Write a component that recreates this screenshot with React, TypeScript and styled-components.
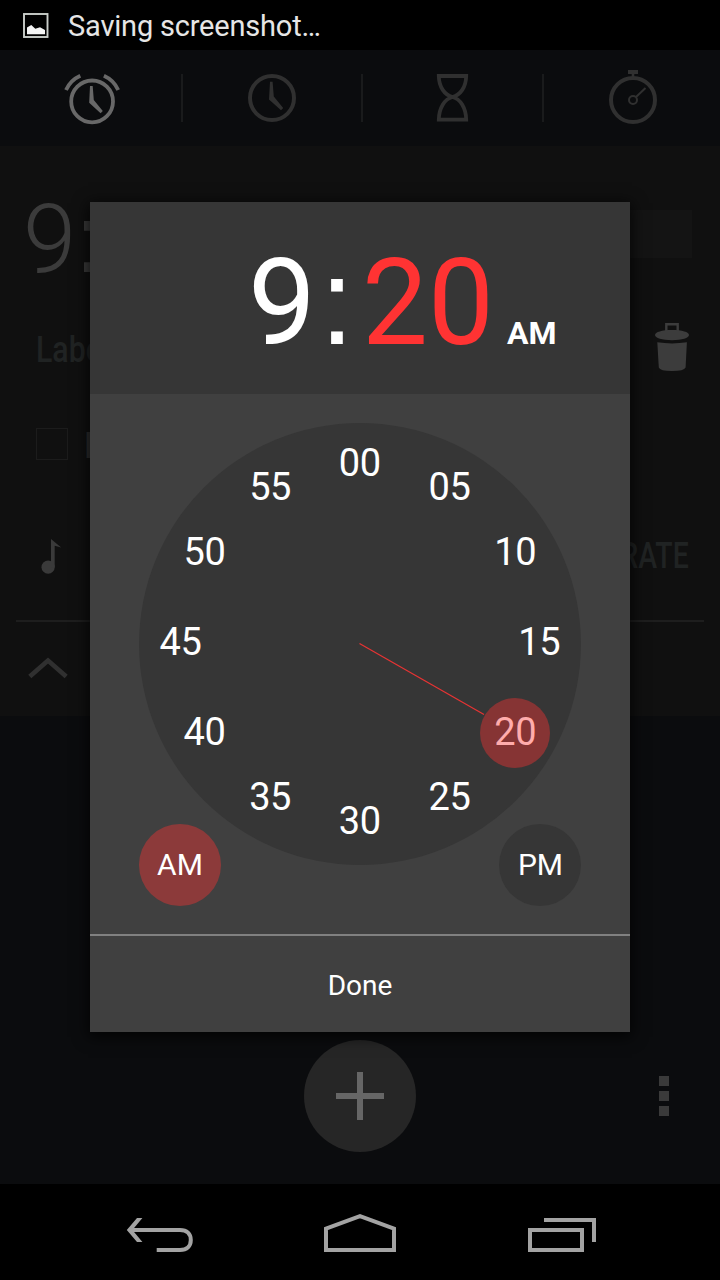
import React from 'react';
import styled, { createGlobalStyle } from 'styled-components';

const GlobalStyle = createGlobalStyle`
  * { box-sizing: border-box; }
  body { margin: 0; background: #000; }
  svg { display: block; flex: none; }
`;

const DIM = '#303030';

const Screen = styled.div`
  position: relative;
  width: 720px;
  height: 1280px;
  overflow: hidden;
  display: flex;
  flex-direction: column;
  background: #0b0c0e;
  font-family: Roboto, 'Liberation Sans', sans-serif;
  color: #fff;
`;

const StatusBar = styled.header`
  height: 50px;
  flex: none;
  display: flex;
  align-items: center;
  gap: 19px;
  padding-left: 22px;
  background: #000;
  color: #e6e6e6;
  font-size: 29px;
  line-height: 48px;
  white-space: nowrap;
`;

const StatusText = styled.span`
  padding-top: 2px;
  letter-spacing: -0.2px;
`;

const Tabs = styled.nav`
  height: 96px;
  flex: none;
  display: grid;
  grid-template-columns: 181px 180px 181px 178px;
`;

const Tab = styled.div<{ $inset: number }>`
  display: flex;
  align-items: center;
  padding-left: ${(p) => p.$inset}px;
`;

const Divider = styled.i`
  width: 2px;
  height: 48px;
  margin-right: 57px;
  background: #1a1b1c;
`;

const Card = styled.section`
  height: 570px;
  flex: none;
  display: flex;
  flex-direction: column;
  background: #101010;
`;

const CardRow = styled.div<{ $height: number; $left?: number; $right?: number }>`
  height: ${(p) => p.$height}px;
  flex: none;
  display: flex;
  align-items: center;
  justify-content: space-between;
  padding: 0 ${(p) => p.$right ?? 28}px 0 ${(p) => p.$left ?? 28}px;
`;

const AlarmTime = styled.span`
  display: flex;
  align-items: baseline;
  margin-top: 10px;
  font-size: 96px;
  font-weight: 300;
  line-height: 96px;
  color: #3b3b3b;
`;

const AlarmColon = styled.span`
  width: 30px;
  margin-left: -1px;
  font-family: 'Liberation Sans', sans-serif;
  font-weight: 400;
`;

const Toggle = styled.span`
  width: 130px;
  height: 48px;
  background: #141414;
`;

const Condensed = styled.span<{ $origin: string; $scale: number; $drop?: number }>`
  display: inline-block;
  margin-top: ${(p) => p.$drop ?? 0}px;
  font-size: 36px;
  font-weight: 500;
  line-height: 42px;
  color: #202323;
  transform: scaleX(${(p) => p.$scale});
  transform-origin: ${(p) => p.$origin} center;
`;

const CheckLine = styled.label`
  display: flex;
  align-items: center;
  gap: 16px;
  font-size: 36px;
  line-height: 42px;
  color: #2e2e2e;
`;

const CheckText = styled.span`
  margin-top: 3px;
  font-weight: 500;
`;

const CheckBox = styled.span`
  width: 32px;
  height: 32px;
  border: 1.5px solid #1c1c1c;
`;

const Rule = styled.div`
  height: 2px;
  flex: none;
  margin: 24px 16px 0;
  background: #1e1e1e;
`;

const Actions = styled.footer`
  flex: 1;
  display: grid;
  grid-template-columns: 1fr 112px 1fr;
  align-items: end;
  padding-bottom: 32px;
`;

const AddButton = styled.div`
  grid-column: 2;
  height: 112px;
  border-radius: 50%;
  background: #262626;
  display: flex;
  align-items: center;
  justify-content: center;
`;

const Overflow = styled.div`
  height: 112px;
  display: flex;
  flex-direction: column;
  justify-content: center;
  align-items: flex-end;
  gap: 5px;
  padding-right: 51px;
`;

const Dot = styled.i`
  width: 10px;
  height: 10px;
  background: #3a3a3a;
`;

const NavBar = styled.nav`
  height: 96px;
  flex: none;
  display: flex;
  justify-content: space-between;
  padding: 0 112px;
  background: #000;
`;

const Dialog = styled.div`
  position: absolute;
  left: 90px;
  top: 202px;
  width: 540px;
  height: 830px;
  display: flex;
  flex-direction: column;
  background: #404040;
  box-shadow: 0 3px 14px 2px rgba(0, 0, 0, 0.75);
`;

const TimeHeader = styled.div`
  height: 192px;
  flex: none;
  display: flex;
  align-items: baseline;
  padding: 33px 0 0 158px;
  background: #363636;
  font-size: 121px;
  line-height: 136px;
  white-space: nowrap;
`;

const Hour = styled.span`
  width: 72px;
`;

const Colon = styled.span`
  width: 42px;
  font-family: 'Liberation Sans', sans-serif;
  font-size: 122px;
  line-height: 120px;
`;

const Minutes = styled.span`
  width: 145px;
  color: #f33;
  transform: scaleX(0.97);
  transform-origin: left center;
`;

const Period = styled.span`
  font-size: 32px;
  font-weight: 700;
  line-height: 40px;
`;

const DialArea = styled.div`
  height: 540px;
  flex: none;
  text-anchor: middle;
`;

const DoneButton = styled.div`
  flex: 1;
  border-top: 2px solid #818181;
  display: flex;
  align-items: center;
  justify-content: center;
  padding-top: 3px;
  font-size: 28px;
`;

const minutes = ['00', '05', '10', '15', '20', '25', '30', '35', '40', '45', '50', '55'];

function Dial() {
  const cx = 360;
  const cy = 644;
  const reach = 179.4;
  return (
    <svg width="540" height="540" viewBox="90 394 540 540" fill="#fff">
      <circle cx={cx} cy={cy} r="221" fill="#363636" />
      <line x1={cx - 0.5} y1={cy - 0.5} x2="484" y2="714.5" stroke="#e83333" strokeWidth="1.2" />
      <circle cx="515" cy="733" r="35" fill="#863434" />
      <g fontSize="38" letterSpacing="-0.4">
        {minutes.map((m, i) => {
          const a = (i * Math.PI) / 6;
          return (
            <text
              key={m}
              x={cx - 0.2 + reach * Math.sin(a)}
              y={Math.floor(cy - reach * Math.cos(a) + 11.4)}
              fill={m === '20' ? '#ffacac' : '#fff'}
            >
              {m}
            </text>
          );
        })}
      </g>
      <circle cx="180" cy="865" r="41" fill="#8c3a3a" />
      <circle cx="540" cy="865" r="41" fill="#363636" />
      <g fontSize="30">
        <text x="180" y="875">AM</text>
        <text x="540.5" y="875">PM</text>
      </g>
    </svg>
  );
}

const PictureIcon = () => (
  <svg width="27" height="28" viewBox="22 12 27 28">
    <rect x="24" y="15" width="23.5" height="23" fill="none" stroke="#c9cdc9" strokeWidth="1.9" />
    <path d="M27 35.2V28.6L31.3 26L35.3 29.8L40 28.3L45 31V35.2Z" fill="#f4f4f4" />
  </svg>
);

const AlarmIcon = () => (
  <svg width="64" height="96" viewBox="60 50 64 96" fill="none" stroke="#686868" strokeWidth="3.8">
    <circle cx="92.1" cy="101.4" r="20.9" />
    <path d="M66 90A28.5 28.5 0 0 1 80.3 75.8M103.9 75.8A28.5 28.5 0 0 1 118.2 90" />
    <path d="M90 86H92.7L93.8 100L102.8 111L100.6 113.2L89.2 102.8Z" fill="#686868" stroke="none" />
  </svg>
);

const ClockIcon = () => (
  <svg width="64" height="96" viewBox="240 50 64 96" fill="none" stroke={DIM} strokeWidth="4">
    <circle cx="272" cy="98" r="22" />
    <path d="M270 81.8H272.6L273.8 96.5L283.2 108L281 110.2L269 99.5Z" fill={DIM} stroke="none" />
  </svg>
);

const HourglassIcon = () => (
  <svg width="64" height="96" viewBox="420 50 64 96" fill="none" stroke={DIM} strokeWidth="3.8">
    <path d="M438.8 76H466.2C466 87 460.5 95 452.5 97C444.5 99 439 108 438.8 119.7H466.2C466 108 460.5 99 452.5 97C444.5 95 439 87 438.8 76Z" />
  </svg>
);

const StopwatchIcon = () => (
  <svg width="64" height="96" viewBox="601 50 64 96" fill="none" stroke={DIM} strokeWidth="4">
    <circle cx="633" cy="100" r="22" />
    <circle cx="633" cy="100" r="4" strokeWidth="2" />
    <path d="M636 97L645.5 88" strokeWidth="2" />
    <path d="M628 70H638V74H634.3V77H631.7V74H628Z" fill={DIM} stroke="none" />
  </svg>
);

const TrashIcon = () => (
  <svg width="36" height="50" viewBox="654 322 36 50" fill="#3c3c3c">
    <path d="M666.3 331V324.2H677.7V331" fill="none" stroke="#3c3c3c" strokeWidth="2.4" />
    <path d="M655 335C655 332 662 330 672 330S689 332 689 335C689 338 682 340.2 672 340.2S655 338 655 335Z" />
    <path d="M657.3 342.3Q672 344.6 686.9 342.3L685.6 367.5Q684 371 672 371T658.8 367.5Z" />
  </svg>
);

const NoteIcon = () => (
  <svg width="22" height="38" viewBox="40 537 22 38" fill="#3a3a3a">
    <circle cx="48.1" cy="567.2" r="6.6" />
    <path d="M51 539L61.2 547.6L54.7 545.8V567.2H51Z" />
  </svg>
);

const ChevronIcon = () => (
  <svg width="40" height="24" viewBox="28 656 40 24" fill="none" stroke={DIM} strokeWidth="4.6">
    <path d="M29.8 676.5L48 660.5L66.2 676.5" />
  </svg>
);

const PlusIcon = () => (
  <svg width="48" height="48" viewBox="0 0 48 48" stroke="#666" strokeWidth="6">
    <path d="M24 0V48M0 24H48" />
  </svg>
);

const BackIcon = () => (
  <svg width="96" height="96" viewBox="112 1184 96 96" fill="none" stroke="#a3a3a3" strokeWidth="4">
    <path d="M130 1230H180C187 1230 190.8 1234 190.8 1240S187 1250 180 1250H156.7" />
    <path d="M126.8 1230L137 1218H142.4L132.4 1230L142.4 1242H137Z" fill="#a3a3a3" stroke="none" />
  </svg>
);

const HomeIcon = () => (
  <svg width="96" height="96" viewBox="312 1184 96 96" fill="none" stroke="#a3a3a3" strokeWidth="4">
    <path d="M326 1228.6L360 1216.2L394 1228.6V1250H326Z" />
  </svg>
);

const RecentIcon = () => (
  <svg width="96" height="96" viewBox="512 1184 96 96" fill="none" stroke="#a3a3a3" strokeWidth="4">
    <rect x="530" y="1230" width="52" height="20" />
    <path d="M544 1220H594V1242" />
  </svg>
);

export default function App() {
  return (
    <Screen>
      <GlobalStyle />
      <StatusBar>
        <PictureIcon />
        <StatusText>Saving screenshot…</StatusText>
      </StatusBar>
      <Tabs>
        <Tab $inset={60}><AlarmIcon /></Tab>
        <Tab $inset={0}><Divider /><ClockIcon /></Tab>
        <Tab $inset={0}><Divider /><HourglassIcon /></Tab>
        <Tab $inset={0}><Divider /><StopwatchIcon /></Tab>
      </Tabs>
      <Card>
        <CardRow $height={176} $left={23}>
          <AlarmTime>9<AlarmColon>:</AlarmColon>20</AlarmTime>
          <Toggle />
        </CardRow>
        <CardRow $height={50} $left={36} $right={30}>
          <Condensed $origin="left" $scale={0.84} $drop={6}>Label</Condensed>
          <TrashIcon />
        </CardRow>
        <CardRow $height={144} $left={36}>
          <CheckLine><CheckBox /><CheckText>Repeat</CheckText></CheckLine>
        </CardRow>
        <CardRow $height={80} $left={40} $right={31}>
          <NoteIcon />
          <Condensed $origin="right" $scale={0.79}>VIBRATE</Condensed>
        </CardRow>
        <Rule />
        <CardRow $height={92}>
          <ChevronIcon />
        </CardRow>
      </Card>
      <Actions>
        <AddButton><PlusIcon /></AddButton>
        <Overflow><Dot /><Dot /><Dot /></Overflow>
      </Actions>
      <NavBar>
        <BackIcon />
        <HomeIcon />
        <RecentIcon />
      </NavBar>
      <Dialog>
        <TimeHeader>
          <Hour>9</Hour>
          <Colon>:</Colon>
          <Minutes>20</Minutes>
          <Period>AM</Period>
        </TimeHeader>
        <DialArea><Dial /></DialArea>
        <DoneButton>Done</DoneButton>
      </Dialog>
    </Screen>
  );
}
